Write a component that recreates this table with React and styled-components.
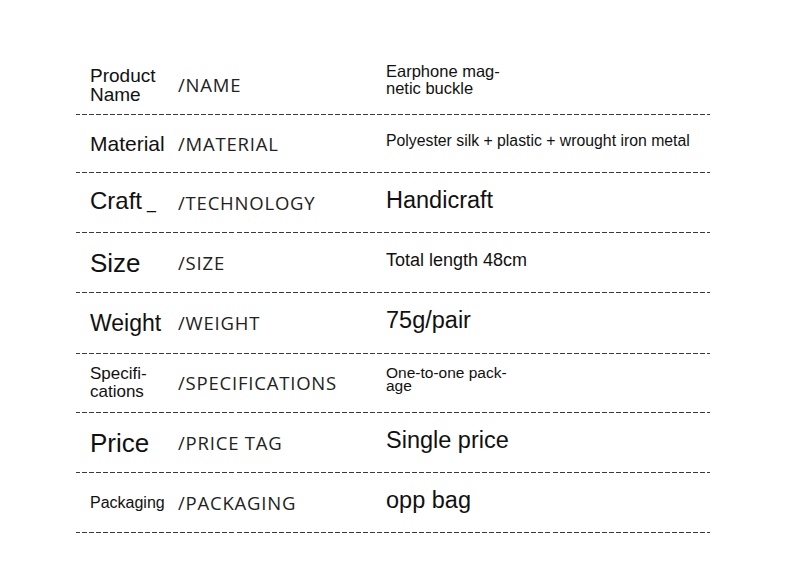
import styled, { createGlobalStyle } from "styled-components";

const Global = createGlobalStyle`
  html, body { margin: 0; padding: 0; background: #fff; }
  body { width: 790px; height: 584px; overflow: hidden; }
`;

const rows = [
  { label: "Product\nName", size: 19, lh: 19, code: "/NAME", value: "Earphone mag-\nnetic buckle", vsize: 16.5, vlh: 17, h: 59, up: 9 },
  { label: "Material", size: 21, code: "/MATERIAL", value: "Polyester silk + plastic + wrought iron metal", vsize: 15.8, h: 57 },
  { label: "Craft", tail: true, size: 24, code: "/TECHNOLOGY", value: "Handicraft", vsize: 23.5, h: 59 },
  { label: "Size", size: 26, code: "/SIZE", value: "Total length 48cm", vsize: 18, h: 59 },
  { label: "Weight", size: 23, code: "/WEIGHT", value: "75g/pair", vsize: 23.5, h: 60 },
  { label: "Specifi-\ncations", size: 17, lh: 18, code: "/SPECIFICATIONS", value: "One-to-one pack-\nage", vsize: 15.5, vlh: 13, h: 58, up: 8 },
  { label: "Price", size: 26, code: "/PRICE TAG", value: "Single price", vsize: 23.5, h: 59 },
  { label: "Packaging", size: 16, code: "/PACKAGING", value: "opp bag", vsize: 23.5, h: 59 },
];

const Page = styled.div`
  padding: 55px 0 0 76px;
`;

const Table = styled.div`
  width: 634px;
  display: flex;
  flex-direction: column;
`;

const Row = styled.div`
  display: grid;
  grid-template-columns: 88px 208px 1fr;
  align-items: center;
  height: ${(p) => p.$h}px;
  padding-left: 14px;
  box-sizing: content-box;
  border-bottom: 1px solid transparent;
  border-image: repeating-linear-gradient(90deg, #3a3a3a 0 5px, transparent 5px 7px) 1;
  font-family: "Liberation Sans", Arial, sans-serif;
  color: #111;
`;

const Label = styled.div`
  font-size: ${(p) => p.$size}px;
  line-height: ${(p) => p.$lh || Math.round(p.$size * 1.15)}px;
  white-space: pre-line;
`;

const Tail = styled.span`
  display: inline-block;
  margin-left: 5px;
  font-size: 16px;
  vertical-align: baseline;
`;

const Code = styled.div`
  font-family: "Open Sans", "DejaVu Sans", sans-serif;
  font-size: 18.5px;
  letter-spacing: 0.8px;
  color: #222;
  line-height: 20px;
`;

const Value = styled.div`
  font-size: ${(p) => p.$size}px;
  line-height: ${(p) => p.$lh || Math.round(p.$size * 1.15)}px;
  white-space: pre-line;
  padding-bottom: ${(p) => p.$up || 5}px;
`;

export default function App() {
  return (
    <>
      <Global />
      <Page>
        <Table>
          {rows.map((r) => (
            <Row key={r.code} $h={r.h}>
              <Label $size={r.size} $lh={r.lh}>
                {r.label}
                {r.tail && <Tail>_</Tail>}
              </Label>
              <Code>{r.code}</Code>
              <Value $size={r.vsize} $lh={r.vlh} $up={r.up}>{r.value}</Value>
            </Row>
          ))}
        </Table>
      </Page>
    </>
  );
}
